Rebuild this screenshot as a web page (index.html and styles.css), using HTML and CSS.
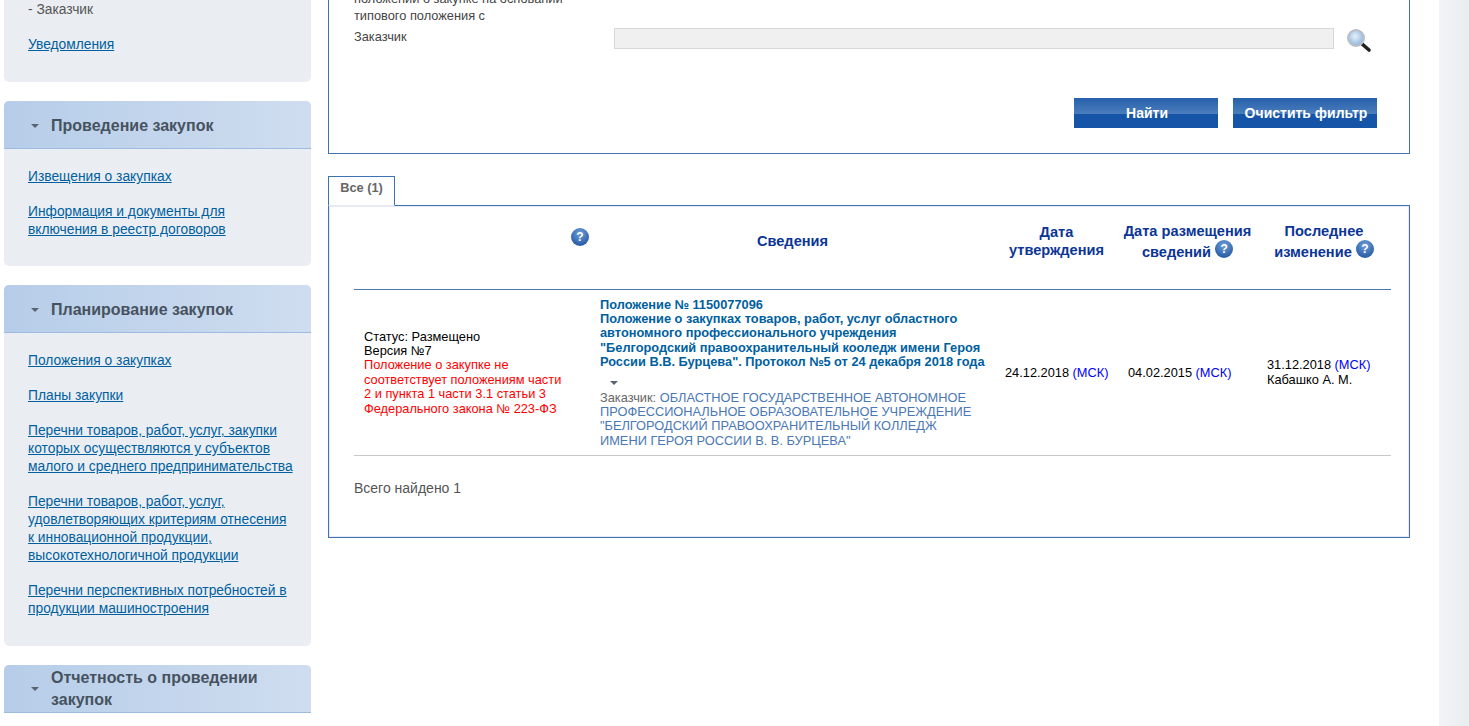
FILE: index.html
```html
<!DOCTYPE html>
<html lang="ru">
<head>
  <meta charset="UTF-8" />
  <meta name="viewport" content="width=device-width, initial-scale=1.0" />
  <title>Положения о закупках</title>
  <link rel="stylesheet" href="styles.css">
</head>
<body>
  <div class="page">

    <!-- SIDEBAR -->
    <div class="sidebar">
      <div class="panel panel-first">
        <div class="panel-body">
          <div class="side-note">- Заказчик</div>
          <a class="side-link" href="#">Уведомления</a>
        </div>
      </div>

      <div class="panel">
        <div class="panel-head"><span class="caret"></span><span>Проведение закупок</span></div>
        <div class="panel-body">
          <a class="side-link" href="#">Извещения о закупках</a>
          <a class="side-link" href="#">Информация и документы для включения в реестр договоров</a>
        </div>
      </div>

      <div class="panel panel-long">
        <div class="panel-head"><span class="caret"></span><span>Планирование закупок</span></div>
        <div class="panel-body">
          <a class="side-link" href="#">Положения о закупках</a>
          <a class="side-link" href="#">Планы закупки</a>
          <a class="side-link" href="#">Перечни товаров, работ, услуг, закупки которых осуществляются у субъектов малого и среднего предпринимательства</a>
          <a class="side-link" href="#">Перечни товаров, работ, услуг, удовлетворяющих критериям отнесения к инновационной продукции, высокотехнологичной продукции</a>
          <a class="side-link" href="#">Перечни перспективных потребностей в продукции машиностроения</a>
        </div>
      </div>

      <div class="panel">
        <div class="panel-head panel-head-wrap"><span class="caret"></span><span>Отчетность о проведении закупок</span></div>
      </div>
    </div>

    <!-- MAIN -->
    <div class="main">
      <div class="filter">
        <div class="filter-row">
          <div class="filter-label">положении о закупке на основании типового положения с</div>
        </div>
        <div class="filter-row filter-row-input">
          <div class="filter-label">Заказчик</div>
          <input class="filter-input" type="text" disabled>
          <svg class="search-icon" width="26" height="25" viewBox="0 0 26 25">
            <defs>
              <radialGradient id="lens" cx="45%" cy="40%" r="60%">
                <stop offset="0" stop-color="#e6f0fa"/>
                <stop offset="1" stop-color="#8fb4dc"/>
              </radialGradient>
            </defs>
            <path d="M15 15l8 7" stroke="#222" stroke-width="3.6" stroke-linecap="round"/>
            <circle cx="10" cy="10" r="8" fill="url(#lens)" stroke="#b9bfc4" stroke-width="2"/>
          </svg>
        </div>
        <div class="filter-buttons">
          <button class="btn">Найти</button>
          <button class="btn">Очистить фильтр</button>
        </div>
      </div>

      <div class="tabs">
        <div class="tab">Все (1)</div>
      </div>

      <div class="results">
        <table class="result-table">
          <thead>
            <tr>
              <th class="col-status"><span class="help">?</span></th>
              <th class="col-info">Сведения</th>
              <th class="col-date1">Дата утверждения</th>
              <th class="col-date2">Дата размещения сведений <span class="help">?</span></th>
              <th class="col-date3">Последнее изменение <span class="help">?</span></th>
            </tr>
          </thead>
          <tbody>
            <tr>
              <td class="cell-status">
                Статус: Размещено<br>
                Версия №7<br>
                <span class="warn">Положение о закупке не соответствует положениям части 2 и пункта 1 части 3.1 статьи 3 Федерального закона № 223-ФЗ</span>
              </td>
              <td class="cell-info">
                <a class="doc-link" href="#">Положение № 1150077096<br>
                Положение о закупках товаров, работ, услуг областного автономного профессионального учреждения "Белгородский правоохранительный кооледж имени Героя России В.В. Бурцева". Протокол №5 от 24 декабря 2018 года</a>
                <div class="more"><span class="caret"></span></div>
                <div class="customer">Заказчик: <a href="#">ОБЛАСТНОЕ ГОСУДАРСТВЕННОЕ АВТОНОМНОЕ ПРОФЕССИОНАЛЬНОЕ ОБРАЗОВАТЕЛЬНОЕ УЧРЕЖДЕНИЕ "БЕЛГОРОДСКИЙ ПРАВООХРАНИТЕЛЬНЫЙ КОЛЛЕДЖ ИМЕНИ ГЕРОЯ РОССИИ В. В. БУРЦЕВА"</a></div>
              </td>
              <td>24.12.2018 <span class="tz">(МСК)</span></td>
              <td>04.02.2015 <span class="tz">(МСК)</span></td>
              <td>31.12.2018 <span class="tz">(МСК)</span><br>Кабашко А. М.</td>
            </tr>
          </tbody>
        </table>
        <div class="total">Всего найдено 1</div>
      </div>
    </div>

    <div class="strip"></div>
  </div>
</body>
</html>
```

FILE: styles.css
```css
html, body {
  margin: 0;
  height: 100%;
  overflow: hidden;
  background: #fff;
  font-family: "Liberation Sans", Arial, sans-serif;
}

.page {
  display: flex;
  height: 726px;
  overflow: hidden;
}

/* sidebar */
.sidebar {
  width: 307px;
  margin-left: 4px;
  flex-shrink: 0;
}

.panel {
  background: #eaeef2;
  border-radius: 5px;
  margin-bottom: 19px;
}

.panel-first {
  margin-top: -18px;
}

.panel-first .panel-body,
.panel-long .panel-body {
  padding-bottom: 11px;
}

.panel-head {
  display: flex;
  align-items: center;
  box-sizing: border-box;
  min-height: 48px;
  padding-left: 27px;
  padding-top: 2px;
  border-bottom: 1px solid #9dbbde;
  border-radius: 5px 5px 0 0;
  background: linear-gradient(to right, #b6cde9, #cfddef);
  color: #47525f;
  font-size: 16px;
  font-weight: bold;
  line-height: 22px;
}

.panel-head-wrap {
  padding-top: 0;
}

.caret {
  flex-shrink: 0;
  display: inline-block;
  width: 0;
  height: 0;
  margin-right: 12px;
  border-left: 4px solid transparent;
  border-right: 4px solid transparent;
  border-top: 4px solid #5a6470;
}

.panel-body {
  padding: 19px 16px 10px 24px;
  font-size: 13.8px;
  line-height: 18px;
}

.side-note {
  color: #555;
  margin-bottom: 17px;
}

.side-link {
  display: block;
  margin-bottom: 17px;
  color: #00609f;
}

/* main column */
.main {
  width: 1082px;
  margin-left: 17px;
  flex-shrink: 0;
}

.filter {
  margin-top: -30px;
  height: 184px;
  box-sizing: border-box;
  padding: 19px 25px 0;
  border: 1px solid #3f72b0;
}

.filter-row {
  display: flex;
  color: #444;
  font-size: 12.8px;
  line-height: 17px;
}

.filter-row-input {
  margin-top: 4px;
  align-items: flex-start;
}

.filter-label {
  width: 210px;
  margin-right: 50px;
}

.filter-input {
  width: 720px;
  height: 21px;
  box-sizing: border-box;
  margin: 0;
  border: 1px solid #d8d8d8;
  background: #f0f0f0;
}

.search-icon {
  margin-left: 12px;
}

.filter-buttons {
  display: flex;
  justify-content: flex-end;
  gap: 15px;
  margin-top: 45px;
  margin-right: 7px;
}

.btn {
  width: 144px;
  height: 30px;
  padding: 0 0 0 2px;
  border: none;
  background: linear-gradient(to bottom, #2560aa 0%, #4b7dbc 53%, #1554a6 53%, #1554a6 100%);
  color: #fff;
  font-family: "Liberation Sans", Arial, sans-serif;
  font-size: 14px;
  font-weight: bold;
}

.tabs {
  display: flex;
  margin-top: 22px;
}

.tab {
  height: 30px;
  box-sizing: border-box;
  width: 67px;
  margin-bottom: -1px;
  position: relative;
  border: 1px solid #3f72b0;
  border-bottom: 1px solid #e6e9f2;
  background: #fff;
  color: #666;
  font-size: 12.8px;
  font-weight: bold;
  line-height: 21px;
  text-align: center;
}

.results {
  height: 333px;
  box-sizing: border-box;
  padding: 0 18px 0 25px;
  border: 1px solid #3f72b0;
  box-shadow: inset 0 0 0 1px #e6ebf5;
}

.result-table {
  width: 1037px;
  table-layout: fixed;
  border-collapse: collapse;
  font-size: 12.8px;
  line-height: 14.4px;
  color: #000;
}

.result-table th {
  box-sizing: border-box;
  height: 83px;
  padding: 0 5px 12px;
  border-bottom: 1px solid #4a78b0;
  color: #0b3596;
  font-size: 14.6px;
  line-height: 18px;
}

.result-table th.col-status {
  width: 236px;
  padding: 0 1px 18px 0;
  text-align: right;
}

.result-table th.col-info { width: 405px; }
.result-table th.col-date1 { width: 123px; }
.result-table th.col-date2 { width: 139px; }
.result-table th.col-date3 { width: 134px; }

.result-table td {
  padding: 8px 5px 7px 10px;
  border-bottom: 1px solid #c8c8c8;
}

.result-table td.cell-status {
  padding-right: 26px;
}

.warn { color: #f00; }
.tz { color: #00f; }

.doc-link {
  color: #00609f;
  font-weight: bold;
  text-decoration: none;
}

.more {
  height: 21px;
  padding-left: 10px;
  line-height: 21px;
}

.customer {
  padding-right: 17px;
  color: #666;
}

.customer a {
  color: #4a78b5;
  text-decoration: none;
}

.help {
  display: inline-block;
  width: 18px;
  height: 18px;
  border-radius: 50%;
  background: radial-gradient(circle at 50% 30%, #6f9fd8, #2a5ea8 75%);
  color: #fff;
  font-size: 12px;
  font-weight: bold;
  line-height: 18px;
  text-align: center;
  vertical-align: 4px;
}

.total {
  margin-top: 23px;
  color: #555;
  font-size: 14px;
  line-height: 18px;
}

.strip {
  width: 30px;
  margin-left: 29px;
  background: linear-gradient(to right, #f2f4f6, #e9edf1);
}
```
